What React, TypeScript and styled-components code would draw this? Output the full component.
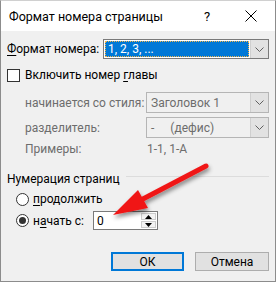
import React from 'react'
import styled, { createGlobalStyle } from 'styled-components'

const GlobalStyle = createGlobalStyle`
  html, body {
    margin: 0;
    padding: 0;
    background: #ffffff;
  }
  body {
    font-family: Roboto, 'Noto Sans', sans-serif;
    font-size: 12px;
  }
`

const Window = styled.div`
  position: relative;
  width: 276px;
  height: 282px;
  box-sizing: border-box;
  border: 1px solid #8c8c8c;
  border-top-color: #d0d0d0;
  background: #f0f0f0;
  display: flex;
  flex-direction: column;
  overflow: hidden;
`

const TitleBar = styled.div`
  height: 30px;
  background: #ffffff;
  display: flex;
  align-items: center;
  padding-left: 8px;
  color: #000;
  font-size: 12.5px;
`

const Title = styled.div`
  flex: 1;
`

const HelpMark = styled.div`
  width: 12px;
  margin-right: 32px;
  font-size: 13px;
  text-align: center;
`

const CloseBox = styled.div`
  width: 12px;
  height: 12px;
  margin-right: 18px;
  display: flex;
`

const Body = styled.div`
  display: flex;
  flex-direction: column;
  padding: 8px 6px 0 6px;
`

interface IRowProps {
  top?: number
  h?: number
  indent?: number
}

const Row = styled.div<IRowProps>`
  display: flex;
  align-items: center;
  height: ${(p) => p.h ?? 20}px;
  margin-top: ${(p) => p.top ?? 0}px;
  padding-left: ${(p) => p.indent ?? 0}px;
  white-space: nowrap;
`

interface ILabelProps {
  w?: number
  muted?: boolean
}

const Label = styled.div<ILabelProps>`
  width: ${(p) => (p.w ? `${p.w}px` : 'auto')};
  flex-shrink: 0;
  color: ${(p) => (p.muted ? '#6d6d6d' : '#000000')};
`

const Key = styled.span`
  text-decoration: underline;
  text-underline-offset: 2px;
`

interface IComboProps {
  w: number
  h: number
  disabled?: boolean
}

const Combo = styled.div<IComboProps>`
  width: ${(p) => p.w}px;
  height: ${(p) => p.h}px;
  box-sizing: border-box;
  border: 1px solid ${(p) => (p.disabled ? '#b5b5b5' : '#7a7a7a')};
  background: ${(p) => (p.disabled ? '#f0f0f0' : '#ffffff')};
  display: flex;
  color: ${(p) => (p.disabled ? '#6d6d6d' : '#000000')};
`

const ComboValue = styled.div`
  flex: 1;
  display: flex;
  align-items: center;
  padding-left: 4px;
`

const Selected = styled.div`
  flex: 1;
  margin: 1px;
  background: #0078d7;
  color: #ffffff;
  display: flex;
  align-items: center;
  padding-left: 3px;
  outline: 1px dotted #f3b54a;
  outline-offset: -1px;
`

const ComboButton = styled.div`
  width: 17px;
  background: #e2e2e2;
  border-left: 1px solid #cfcfcf;
  display: flex;
  align-items: center;
  justify-content: center;
`

const CheckBox = styled.div`
  width: 13px;
  height: 13px;
  box-sizing: border-box;
  border: 1px solid #333333;
  background: #ffffff;
  margin-right: 5px;
`

const Gap = styled.span<{ w: number }>`
  display: inline-block;
  width: ${(p) => p.w}px;
`

const GroupHead = styled.div`
  display: flex;
  align-items: center;
  height: 16px;
  margin-top: 14px;
`

const GroupLine = styled.div`
  flex: 1;
  height: 1px;
  background: #dcdcdc;
  margin-left: 6px;
  margin-top: -5px;
`

const Radio = styled.div<{ checked?: boolean }>`
  width: 13px;
  height: 13px;
  box-sizing: border-box;
  border: 1px solid #333333;
  border-radius: 50%;
  background: #ffffff;
  margin-right: 4px;
  display: flex;
  align-items: center;
  justify-content: center;
  &::after {
    content: '';
    display: ${(p) => (p.checked ? 'block' : 'none')};
    width: 7px;
    height: 7px;
    border-radius: 50%;
    background: #333333;
  }
`

const SpinBox = styled.div`
  width: 65px;
  height: 19px;
  box-sizing: border-box;
  border: 1px solid #7a7a7a;
  background: #ffffff;
  display: flex;
`

const SpinValue = styled.div`
  flex: 1;
  padding-left: 3px;
  display: flex;
  align-items: center;
`

const SpinButtons = styled.div`
  width: 15px;
  margin: 1px;
  display: flex;
  flex-direction: column;
  gap: 1px;
`

const SpinButton = styled.div`
  flex: 1;
  border: 1px solid #cccccc;
  background: #f3f3f3;
  display: flex;
  align-items: center;
  justify-content: center;
`

const Buttons = styled.div`
  display: flex;
  justify-content: flex-end;
  gap: 11px;
  margin-top: 22px;
`

const Button = styled.div<{ primary?: boolean }>`
  width: ${(p) => (p.primary ? 73 : 74)}px;
  height: 19px;
  box-sizing: border-box;
  border: ${(p) => (p.primary ? '2px solid #0078d7' : '1px solid #adadad')};
  background: #e1e1e1;
  display: flex;
  align-items: center;
  justify-content: center;
`

const Overlay = styled.svg`
  position: absolute;
  left: 0;
  top: 0;
  pointer-events: none;
`

const Chevron = () => (
  <svg width="9" height="5" viewBox="0 0 9 5">
    <path d="M0.5 0.5 L4.5 4.5 L8.5 0.5" fill="none" stroke="#606060" strokeWidth="1" />
  </svg>
)

const Triangle = ({ up }: { up?: boolean }) => (
  <svg width="7" height="4" viewBox="0 0 7 4">
    <path d={up ? 'M0 4 L3.5 0 L7 4 Z' : 'M0 0 L3.5 4 L7 0 Z'} fill="#000" />
  </svg>
)

const App = () => {
  return (
    <>
      <GlobalStyle />
      <Window>
        <TitleBar>
          <Title>Формат номера страницы</Title>
          <HelpMark>?</HelpMark>
          <CloseBox>
            <svg width="12" height="12" viewBox="0 0 12 12">
              <path d="M0.5 0.5 L11.5 11.5 M11.5 0.5 L0.5 11.5" stroke="#000" strokeWidth="1" />
            </svg>
          </CloseBox>
        </TitleBar>
        <Body>
          <Row>
            <Label w={96}>
              <Key>Ф</Key>ормат номера:
            </Label>
            <Combo w={166} h={20}>
              <Selected>1, 2, 3, ...</Selected>
              <ComboButton>
                <Chevron />
              </ComboButton>
            </Combo>
          </Row>
          <Row top={6}>
            <CheckBox />
            <Label>
              Включить номер <Key>г</Key>лавы
            </Label>
          </Row>
          <Row top={7} h={21} indent={18}>
            <Label w={121} muted>
              начинается со стиля:
            </Label>
            <Combo w={123} h={21} disabled>
              <ComboValue>Заголовок 1</ComboValue>
              <ComboButton>
                <Chevron />
              </ComboButton>
            </Combo>
          </Row>
          <Row top={4} h={21} indent={18}>
            <Label w={121} muted>
              разделитель:
            </Label>
            <Combo w={123} h={21} disabled>
              <ComboValue>
                -<Gap w={16} />(дефис)
              </ComboValue>
              <ComboButton>
                <Chevron />
              </ComboButton>
            </Combo>
          </Row>
          <Row top={3} h={16} indent={18}>
            <Label w={122} muted>
              Примеры:
            </Label>
            <Label muted>1-1, 1-A</Label>
          </Row>
          <GroupHead>
            <Label>Нумерация страниц</Label>
            <GroupLine />
          </GroupHead>
          <Row top={3} h={18} indent={9}>
            <Radio />
            <Label>
              <Key>п</Key>родолжить
            </Label>
          </Row>
          <Row top={3} h={19} indent={9}>
            <Radio checked />
            <Label w={60}>
              н<Key>а</Key>чать с:
            </Label>
            <SpinBox>
              <SpinValue>0</SpinValue>
              <SpinButtons>
                <SpinButton>
                  <Triangle up />
                </SpinButton>
                <SpinButton>
                  <Triangle />
                </SpinButton>
              </SpinButtons>
            </SpinBox>
          </Row>
          <Buttons>
            <Button primary>ОК</Button>
            <Button>Отмена</Button>
          </Buttons>
        </Body>
        <Overlay width="276" height="282" viewBox="0 0 276 282">
          <defs>
            <filter id="sh" x="-20%" y="-20%" width="140%" height="160%">
              <feDropShadow dx="1" dy="3" stdDeviation="2" floodColor="#000" floodOpacity="0.45" />
            </filter>
          </defs>
          <g filter="url(#sh)">
            <path d="M205 165 L140 199" stroke="#f01818" strokeWidth="5" strokeLinecap="round" />
            <path d="M112 214 L137 189 L147 207 Z" fill="#f01818" />
          </g>
        </Overlay>
      </Window>
    </>
  )
}

export default App
